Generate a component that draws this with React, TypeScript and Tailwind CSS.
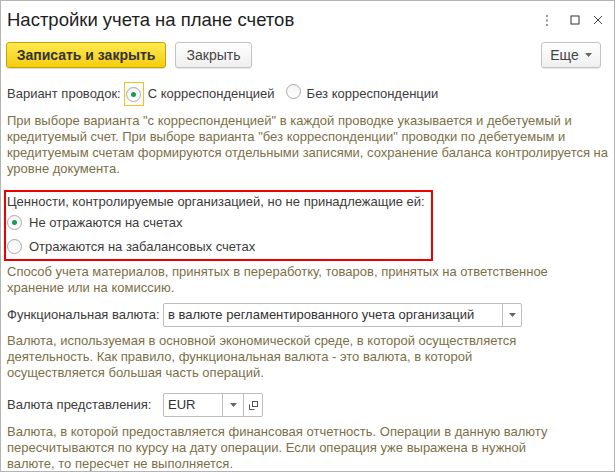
import React from "react";

const font = { fontFamily: '"Liberation Sans", Arial, sans-serif' };

function Radio({ checked }: { checked?: boolean }) {
  return (
    <span className="inline-flex items-center justify-center w-[15px] h-[15px] rounded-full border border-[#a8a8a8] bg-gradient-to-b from-[#f4f4f4] to-white shrink-0">
      {checked && <span className="w-[5px] h-[5px] rounded-full bg-[#1b9b52]" />}
    </span>
  );
}

function Arrow() {
  return (
    <svg width="7" height="4" viewBox="0 0 7 4">
      <path d="M0 0 L7 0 L3.5 4 Z" fill="#666" />
    </svg>
  );
}

function Desc({ lines, className = "" }: { lines: string[]; className?: string }) {
  return (
    <div className={"pl-[6px] text-[#7c7048] leading-[16px] whitespace-nowrap shrink-0 " + className}>
      {lines.map((l, i) => (
        <div key={i}>{l}</div>
      ))}
    </div>
  );
}

export default function App() {
  return (
    <div className="w-[616px] h-[473px] bg-white" style={font}>
      <div className="w-[615px] h-[472px] border border-[#b4b4b4] bg-white flex flex-col text-[13px] text-[#3c3c3c] overflow-hidden">
        {/* Title */}
        <div className="h-[38px] flex items-center pl-[6px] pr-[11px] shrink-0">
          <div className="text-[18.5px] text-[#1e1e1e] leading-none">Настройки учета на плане счетов</div>
          <div className="ml-auto flex items-center">
            <svg width="4" height="11" viewBox="0 0 4 11" className="mr-[21px]">
              <rect x="1" y="0" width="2" height="2" fill="#999" />
              <rect x="1" y="4.5" width="2" height="2" fill="#999" />
              <rect x="1" y="9" width="2" height="2" fill="#999" />
            </svg>
            <svg width="10" height="10" viewBox="0 0 10 10" className="mr-[13px]">
              <rect x="1" y="1" width="8" height="8" fill="none" stroke="#333" strokeWidth="1" />
            </svg>
            <svg width="10" height="10" viewBox="0 0 10 10">
              <path d="M1 1 L9 9 M9 1 L1 9" stroke="#444" strokeWidth="1" />
            </svg>
          </div>
        </div>
        {/* Buttons */}
        <div className="h-[26px] mt-[3px] flex items-stretch pl-[5px] pr-[13px] shrink-0">
          <button className="w-[160px] rounded-[3px] border border-[#c3a300] bg-gradient-to-b from-[#ffe94d] to-[#f5cd00] text-[14px] font-bold text-[#333] shadow-[0_1px_1px_rgba(0,0,0,0.15)]">
            Записать и закрыть
          </button>
          <button className="ml-[9px] w-[77px] rounded-[3px] border border-[#c4c4c4] bg-gradient-to-b from-white to-[#efefef] text-[14px] text-[#444] shadow-[0_1px_1px_rgba(0,0,0,0.1)]">
            Закрыть
          </button>
          <button className="ml-auto w-[60px] rounded-[3px] border border-[#c4c4c4] bg-gradient-to-b from-white to-[#efefef] text-[14px] text-[#444] flex items-center justify-center gap-[6px] shadow-[0_1px_1px_rgba(0,0,0,0.1)]">
            Еще
            <Arrow />
          </button>
        </div>
        {/* Variant */}
        <div className="mt-[14px] h-[24px] flex items-center pl-[6px] shrink-0">
          <span>Вариант проводок:</span>
          <span className="ml-[3px] w-[20px] h-[24px] border border-[#f0c419] flex items-center justify-center">
            <Radio checked />
          </span>
          <span className="ml-[4px]">С корреспонденцией</span>
          <span className="ml-[11px]"><Radio /></span>
          <span className="ml-[6px]">Без корреспонденции</span>
        </div>
        <Desc
          className="mt-[7px]"
          lines={[
            'При выборе варианта "с корреспонденцией" в каждой проводке указывается и дебетуемый и',
            'кредитуемый счет. При выборе варианта "без корреспонденции" проводки по дебетуемым и',
            "кредитуемым счетам формируются отдельными записями, сохранение баланса контролируется на",
            "уровне документа.",
          ]}
        />
        {/* Red box */}
        <div className="mt-[13px] ml-[3px] w-[429px] h-[71px] border-2 border-[#ee0000] flex flex-col pl-[1px] shrink-0">
          <div className="h-[19px] flex items-center">Ценности, контролируемые организацией, но не принадлежащие ей:</div>
          <div className="h-[23px] flex items-center">
            <Radio checked />
            <span className="ml-[7px]">Не отражаются на счетах</span>
          </div>
          <div className="h-[25px] flex items-center">
            <Radio />
            <span className="ml-[7px]">Отражаются на забалансовых счетах</span>
          </div>
        </div>
        <Desc
          className="mt-[3px]"
          lines={[
            "Способ учета материалов, принятых в переработку, товаров, принятых на ответственное",
            "хранение или на комиссию.",
          ]}
        />
        {/* Functional currency */}
        <div className="mt-[7px] h-[24px] flex items-center pl-[6px] shrink-0">
          <span className="w-[156px]">Функциональная валюта:</span>
          <div className="w-[359px] h-[24px] border border-[#bdbdbd] rounded-[2px] flex items-stretch">
            <div className="flex-1 flex items-center pl-[4px] text-[#333]">в валюте регламентированного учета организаций</div>
            <div className="w-[19px] border-l border-[#bdbdbd] flex items-center justify-center">
              <Arrow />
            </div>
          </div>
        </div>
        <Desc
          className="mt-[6px]"
          lines={[
            "Валюта, используемая в основной экономической среде, в которой осуществляется",
            "деятельность. Как правило, функциональная валюта - это валюта, в которой",
            "осуществляется большая часть операций.",
          ]}
        />
        {/* Presentation currency */}
        <div className="mt-[12px] h-[24px] flex items-center pl-[6px] shrink-0">
          <span className="w-[156px]">Валюта представления:</span>
          <div className="w-[100px] h-[24px] border border-[#bdbdbd] rounded-[2px] flex items-stretch">
            <div className="flex-1 flex items-center pl-[4px] text-[#333]">EUR</div>
            <div className="w-[21px] border-l border-[#bdbdbd] flex items-center justify-center">
              <Arrow />
            </div>
            <div className="w-[19px] border-l border-[#bdbdbd] flex items-center justify-center">
              <svg width="9" height="9" viewBox="0 0 9 9">
                <rect x="3.5" y="0.5" width="5" height="5" fill="none" stroke="#555" />
                <path d="M0.5 3.5 V8.5 H5.5" fill="none" stroke="#555" />
              </svg>
            </div>
          </div>
        </div>
        <Desc
          className="mt-[7px]"
          lines={[
            "Валюта, в которой предоставляется финансовая отчетность. Операции в данную валюту",
            "пересчитываются по курсу на дату операции. Если операция уже выражена в нужной",
            "валюте, то пересчет не выполняется.",
          ]}
        />
      </div>
    </div>
  );
}
